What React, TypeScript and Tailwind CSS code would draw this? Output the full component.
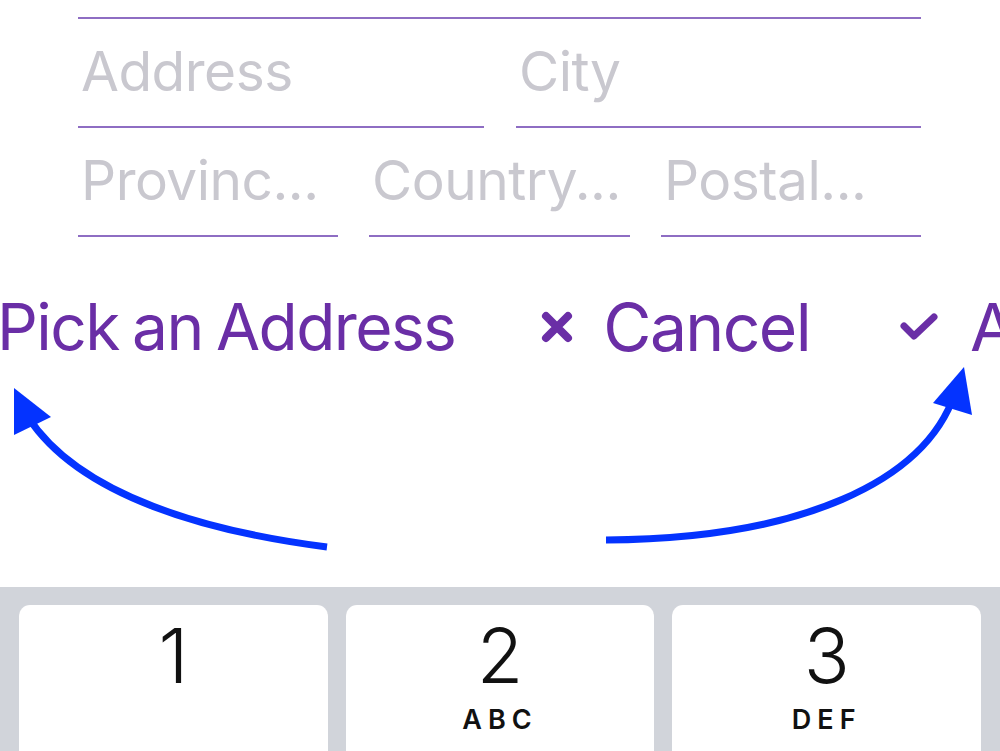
import React from "react";

const font = { fontFamily: "Inter, 'Noto Sans', sans-serif" };

function Field({ label, className }: { label: string; className: string }) {
  return (
    <div className={`flex h-[109px] shrink-0 items-center border-b-2 border-[#8e6dc3] ${className}`}>
      <span className="whitespace-nowrap pl-[3px] pb-[2px] text-[55px] leading-none tracking-[-0.5px] text-[#c9c8cf]">
        {label}
      </span>
    </div>
  );
}

function Key({ num, letters }: { num: string; letters?: string }) {
  return (
    <div className="flex h-[160px] flex-1 flex-col items-center rounded-[11px] bg-white pt-[14px] shadow-[0_1px_0_#898a8d]">
      <span className="text-[76px] font-light leading-[72px] text-[#111]">{num}</span>
      {letters && (
        <span className="mt-[15px] text-[27px] font-semibold leading-none tracking-[6px] text-[#111]">
          {letters}
        </span>
      )}
    </div>
  );
}

export default function App() {
  return (
    <div className="flex h-[751px] w-[1000px] flex-col overflow-hidden bg-white" style={font}>
      <div className="mt-[17px] ml-[78px] w-[843px] border-t-2 border-[#8e6dc3]">
        <div className="flex gap-[32px]">
          <Field label="Address" className="w-[406px]" />
          <Field label="City" className="w-[405px]" />
        </div>
        <div className="flex gap-[31px]">
          <Field label="Provinc..." className="w-[260px]" />
          <Field label="Country..." className="w-[261px]" />
          <Field label="Postal..." className="w-[260px]" />
        </div>
      </div>

      <div className="ml-[-3px] mt-[55px] flex h-[70px] shrink-0 items-center whitespace-nowrap text-[66px] leading-none tracking-[-1.6px] text-[#6a2ea6]">
        <span className="shrink-0 text-[64px] [word-spacing:-3px]">Pick an Address</span>
        <svg className="ml-[86px] h-[32px] w-[32px] shrink-0" viewBox="0 0 32 32">
          <path d="M5 5 L27 27 M27 5 L5 27" stroke="#6a2ea6" strokeWidth="8" strokeLinecap="round" />
        </svg>
        <span className="ml-[30px] shrink-0">Cancel</span>
        <svg className="ml-[89px] h-[30px] w-[40px] shrink-0" viewBox="0 0 40 30">
          <path d="M5 14 L15 24 L35 5" stroke="#6a2ea6" strokeWidth="7" strokeLinecap="round" strokeLinejoin="round" fill="none" />
        </svg>
        <span className="ml-[31px] shrink-0">Accept</span>
      </div>

      <svg className="h-[225px] w-[1000px] shrink-0" viewBox="0 365 1000 225">
        <path d="M327 550 C 210 535, 80 500, 28 420" stroke="#0433ff" strokeWidth="7" fill="none" />
        <polygon points="14,391 14,438 51,420" fill="#0433ff" />
        <path d="M606 543 C 800 542, 925 485, 955 396" stroke="#0433ff" strokeWidth="7" fill="none" />
        <polygon points="964,370 933,406 972,418" fill="#0433ff" />
      </svg>

      <div className="flex flex-1 gap-[18px] bg-[#d1d4da] px-[19px] pt-[18px]">
        <Key num="1" />
        <Key num="2" letters="ABC" />
        <Key num="3" letters="DEF" />
      </div>
    </div>
  );
}
